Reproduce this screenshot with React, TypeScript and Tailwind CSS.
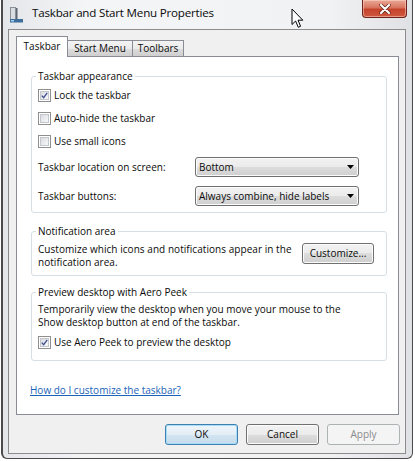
import React from "react";
import { cx } from "class-variance-authority";

const FONT = "font-['Open_Sans',sans-serif]";
const BTN_BG =
  "bg-[linear-gradient(#f2f2f2,#ebebeb_50%,#dddddd_50%,#cfcfcf)] shadow-[inset_0_0_0_1px_#fcfcfc]";

function CheckBox({ checked }: { checked?: boolean }) {
  return (
    <span className="flex h-[13px] w-[13px] shrink-0 border border-[#8f8f8f] bg-white p-px">
      <span className="flex h-full w-full items-center justify-center border border-[#c3c6cb] bg-linear-to-br from-[#d9dce1] to-[#f8f8f8]">
        {checked && (
          <svg width="9" height="9" viewBox="0 0 9 9">
            <path d="M1 4.6 L3.4 7.2 L8 1.2" fill="none" stroke="#3f4f8f" strokeWidth="1.7" />
          </svg>
        )}
      </span>
    </span>
  );
}

function Select({ value }: { value: string }) {
  return (
    <div
      className={cx(
        "flex h-[20px] w-[164px] items-center justify-between rounded-[3px] border border-[#707070] pl-[3px] pr-[4px]",
        BTN_BG,
      )}
    >
      <span>{value}</span>
      <svg width="7" height="4" viewBox="0 0 7 4">
        <path d="M0 0 H7 L3.5 4 Z" fill="#000" />
      </svg>
    </div>
  );
}

function Group({
  title,
  className,
  children,
}: {
  title: string;
  className?: string;
  children: React.ReactNode;
}) {
  return (
    <fieldset className={cx("w-[356px] rounded-[3px] border border-[#d5dfe5] px-[6px]", className)}>
      <legend className="-ml-[2px] px-[2px] leading-[14px]">{title}</legend>
      {children}
    </fieldset>
  );
}

function CheckRow({ label, checked, className }: { label: string; checked?: boolean; className?: string }) {
  return (
    <div className={cx("flex h-[23px] items-center gap-[3px]", className)}>
      <CheckBox checked={checked} />
      <span>{label}</span>
    </div>
  );
}

function Cursor() {
  return (
    <svg className="absolute left-[291px] top-[8px]" width="13" height="21" viewBox="0 0 13 21">
      <path
        d="M1 1 L1 16.5 L4.6 13 L7.3 19.3 L9.6 18.3 L7 12.2 L11.8 12.2 Z"
        fill="#fff"
        stroke="#000"
        strokeWidth="1"
        strokeLinejoin="round"
      />
    </svg>
  );
}

const TAB_BG = "bg-[linear-gradient(#f3f3f3,#ebebeb_50%,#dddddd_50%,#cfcfcf)]";

export default function App() {
  return (
    <div className={cx("relative h-[461px] w-[415px] overflow-hidden bg-white pl-px text-[10px] leading-[13px] text-[#0a0a0a]", FONT)}>
      <div className="flex h-[459px] w-[412px] flex-col rounded-b-[6px] border-b border-l-2 border-r border-[#4b4b4b] bg-[linear-gradient(90deg,#e4e6e9,#f4f5f7_20%,#f1f2f4_80%,#dfe1e4)]">
        {/* title bar */}
        <div className="flex h-[29px] items-start">
          <svg className="ml-[7px] mt-[7px]" width="14" height="16" viewBox="0 0 14 16">
            <rect x="0.5" y="0.5" width="5" height="12" fill="#d9dde2" stroke="#8a9098" />
            <rect x="6" y="1" width="1.5" height="12" fill="#5d6670" />
            <rect x="0" y="12" width="13" height="3.5" fill="#3e6f9c" />
            <rect x="1" y="13" width="3" height="1.5" fill="#9fd0f2" />
          </svg>
          <span className="ml-[8px] mt-[5px] text-[11.6px] leading-[16px] tracking-[-0.2px]">
            Taskbar and Start Menu Properties
          </span>
          <div className="mr-[5px] ml-auto flex h-[18px] w-[45px] items-center justify-center rounded-b-[4px] border border-t-0 border-[#6e2318] bg-[linear-gradient(#e9a996,#d8745f_45%,#c5432b_55%,#d0583f)] shadow-[inset_0_0_0_1px_rgba(255,220,210,0.5)]">
            <svg width="12" height="10" viewBox="0 0 12 10">
              <path d="M2 1 L10 9 M10 1 L2 9" stroke="#5a1a10" strokeWidth="3.4" strokeLinecap="round" />
              <path d="M2 1 L10 9 M10 1 L2 9" stroke="#fff" strokeWidth="2.2" strokeLinecap="round" />
            </svg>
          </div>
        </div>

        {/* client area */}
        <div className="ml-[5px] flex h-[425px] w-[398px] flex-col border border-[#8c8c8c] bg-[#f0f0f0] pl-[7px] pt-[6px]">
          <div className="relative z-10 -mb-px flex h-[21px] items-end">
            <div className="flex h-[21px] w-[52px] items-center justify-center border border-b-0 border-[#898c95] bg-white pb-px">
              Taskbar
            </div>
            <div className={cx("mb-px flex h-[16px] w-[65px] items-center justify-center border-r border-t border-[#898c95]", TAB_BG)}>
              Start Menu
            </div>
            <div className={cx("mb-px flex h-[16px] w-[51px] items-center justify-center border-r border-t border-[#898c95]", TAB_BG)}>
              Toolbars
            </div>
          </div>

          <div className="flex h-[359px] w-[383px] flex-col border border-[#898c95] bg-white pl-[14px]">
            <Group title="Taskbar appearance" className="mt-[12px] pb-[6px]">
              <CheckRow label="Lock the taskbar" checked className="mt-px" />
              <CheckRow label="Auto-hide the taskbar" />
              <CheckRow label="Use small icons" />
              <div className="mt-[4px] flex h-[20px] items-center">
                <span className="w-[157px]">Taskbar location on screen:</span>
                <Select value="Bottom" />
              </div>
              <div className="mt-[9px] flex h-[20px] items-center">
                <span className="w-[157px]">Taskbar buttons:</span>
                <Select value="Always combine, hide labels" />
              </div>
            </Group>

            <Group title="Notification area" className="mt-[11px] pb-[6px]">
              <div className="flex items-start pt-[5px]">
                <p className="whitespace-nowrap tracking-[0.05px]">
                  Customize which icons and notifications appear in the
                  <br />
                  notification area.
                </p>
                <button
                  className={cx(
                    "ml-auto mr-[6px] h-[21px] w-[72px] rounded-[3px] border border-[#707070] leading-[13px]",
                    BTN_BG,
                  )}
                >
                  Customize...
                </button>
              </div>
            </Group>

            <Group title="Preview desktop with Aero Peek" className="mt-[9px] pb-[6px]">
              <p className="whitespace-nowrap pt-[4px]">
                Temporarily view the desktop when you move your mouse to the
                <br />
                Show desktop button at end of the taskbar.
              </p>
              <CheckRow label="Use Aero Peek to preview the desktop" checked className="mt-[2px]" />
            </Group>

            <a className="-ml-px mt-[23px] w-fit text-[#1a63b8] underline" href="#">
              How do I customize the taskbar?
            </a>
          </div>

          <div className="mt-[9px] flex justify-end gap-[8px] pr-[5px]">
            <button className="h-[21px] w-[73px] rounded-[3px] border border-[#3c7fb1] bg-[linear-gradient(#eef5fa,#e3eef6_50%,#d3e5f1_50%,#c6dcec)] shadow-[inset_0_0_0_1px_#a8dcf7]">
              OK
            </button>
            <button className={cx("h-[21px] w-[73px] rounded-[3px] border border-[#707070]", BTN_BG)}>
              Cancel
            </button>
            <button className="h-[21px] w-[73px] rounded-[3px] border border-[#adb2b5] bg-[#f4f4f4] text-[#8a8a8a]">
              Apply
            </button>
          </div>
        </div>
      </div>
      <Cursor />
    </div>
  );
}
